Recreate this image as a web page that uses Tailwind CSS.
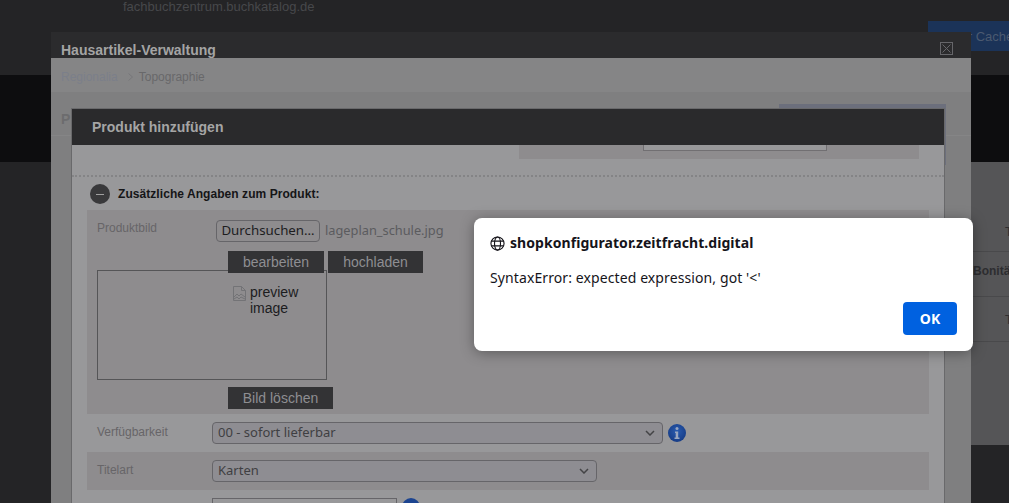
<!DOCTYPE html>
<html lang="de">
<head>
    <meta charset="UTF-8" />
    <title>Hausartikel-Verwaltung</title>
    <script src="https://cdn.jsdelivr.net/npm/@tailwindcss/browser@4"></script>
</head>
<body class="bg-[#242426] font-['Liberation_Sans',sans-serif] overflow-hidden">
<div class="relative h-[503px] w-[1009px] overflow-hidden">
    <!-- Page behind the windows -->
    <div class="h-[75px] bg-[#242426] pl-[123px] text-[13px] leading-[14px] text-[#47484b]">fachbuchzentrum.buchkatalog.de</div>
    <div class="h-[87px] bg-[#0d0d0f]"></div>
    <div class="ml-auto h-[283px] w-[38px] overflow-hidden whitespace-nowrap bg-[#555557] pl-[2px] text-[12px] text-[#2d2d30]">
        <div class="h-[90px] border-b border-[#49494b] pl-[32px] pt-[61px]">T</div>
        <div class="h-[45px] border-b border-[#49494b] pt-[10px] font-bold">Bonität</div>
        <div class="h-[45px] border-b border-[#49494b] pl-[32px] pt-[14px]">T</div>
    </div>
    <div class="absolute left-[928px] top-[21px] h-[30px] w-[81px] overflow-hidden whitespace-nowrap bg-[#1b3358] pl-[13px] pt-[8px] text-[13px] leading-[15px] text-[#4b5a70]">Clear Cache</div>

    <!-- Outer window -->
    <div class="absolute left-[51px] top-[32px] h-[471px] w-[920px] bg-[#7f7f80]">
        <div class="flex h-[26px] items-start justify-between bg-[#2b2b2d] pl-[10px] pr-[18px]">
            <span class="pt-[10px] text-[14px] font-bold leading-[16px] text-[#a4a4a4]">Hausartikel-Verwaltung</span>
            <svg class="mt-[10px] h-[13px] w-[13px]" viewBox="0 0 13 13" fill="none" stroke="#66666a"><rect x="0.5" y="0.5" width="12" height="12"/><path d="M2.5 2.5l8 8M10.5 2.5l-8 8"/></svg>
        </div>
        <div class="flex h-[34px] items-center bg-[#858586] pl-[10px] pt-[4px] text-[12px]">
            <span class="text-[#7b7f8a]">Regionalia</span>
            <svg class="ml-[10px] h-[8px] w-[5px]" viewBox="0 0 5 8" fill="none" stroke="#77777a"><path d="M.5.5l4 3.5-4 3.5"/></svg>
            <span class="ml-[6px] text-[#68686a]">Topographie</span>
        </div>
        <div class="relative h-[44px] border-b border-[#858586] bg-[#7f7f80] pl-[10px] pt-[17px] text-[14px] font-bold text-[#6c6c6e]">
            P
            <div class="absolute right-[25px] top-[12px] h-[61px] w-[167px] bg-[#6c6f7c]"></div>
        </div>
    </div>

    <!-- Inner window -->
    <div class="absolute left-[71px] top-[108px] h-[395px] w-[874px] border-l border-r border-t border-[#69696b] bg-[#98989a]">
        <div class="flex h-[36px] items-center bg-[#2a2a2c] pl-[20px] text-[14px] font-bold text-[#a5a5a5]">Produkt hinzufügen</div>
        <div class="ml-[447px] mr-[25px] h-[14px] bg-[#8e8c8e]">
            <div class="ml-[124px] h-[6px] w-[184px] border-b border-l border-r border-[#716f72] bg-[#98989a]"></div>
        </div>
        <div class="mt-[16px] h-0 border-t-2 border-dotted border-[#848486]"></div>
        <div class="flex h-[33px] items-center gap-[8px] pl-[18px] pt-px">
            <div class="flex h-[20px] w-[20px] items-center justify-center rounded-full bg-[#39393b]"><div class="h-px w-[8px] bg-[#a0a0a0]"></div></div>
            <span class="text-[12px] font-bold tracking-[0.06px] text-[#151517]">Zusätzliche Angaben zum Produkt:</span>
        </div>

        <!-- Produktbild -->
        <div class="relative ml-[15px] mr-[15px] h-[204px] bg-[#8e8c8e]">
            <div class="absolute left-[10px] top-[11px] text-[12px] leading-[14px] text-[#676568]">Produktbild</div>
            <div class="absolute left-[129px] top-[10px] flex items-center gap-[5px] font-['Noto_Sans',sans-serif] text-[12.8px]">
                <button class="h-[22px] w-[104px] whitespace-nowrap rounded-[4px] border border-[#666569] text-[13.3px] text-[#1d1d1f]">Durchsuchen…</button>
                <span class="text-[#5b5b5e]">lageplan_schule.jpg</span>
            </div>
            <div class="absolute left-[10px] top-[60px] h-[110px] w-[230px] border border-[#555557]"></div>
            <div class="absolute left-[141px] top-[41px] flex gap-[4px] text-[14px]">
                <div class="flex h-[22px] w-[96px] items-center justify-center bg-[#333335] text-[#8e8e92]">bearbeiten</div>
                <div class="flex h-[22px] w-[95px] items-center justify-center bg-[#333335] text-[#8e8e92]">hochladen</div>
            </div>
            <div class="absolute left-[146px] top-[74px] flex gap-[4px] text-[14px] leading-[16px] text-[#1c1c1e]">
                <svg class="mt-[2px] h-[15px] w-[13px]" viewBox="0 0 13 15" fill="none" stroke="#737376"><path d="M.5.5h8l4 4v10H.5zM8.5.5v4h4M1 11l3-3 2 2 2-2 4 3M1 13l3-2 2 2 2-2 4 2"/></svg>
                <span class="w-[60px]">preview image</span>
            </div>
            <div class="absolute left-[141px] top-[177px] flex h-[22px] w-[105px] items-center justify-center bg-[#333335] text-[14px] text-[#8e8e92]">Bild löschen</div>
        </div>

        <!-- Verfügbarkeit -->
        <div class="ml-[15px] mr-[15px] flex h-[38px] items-center">
            <span class="w-[125px] pb-[2px] pl-[10px] text-[12px] text-[#676568]">Verfügbarkeit</span>
            <div class="flex h-[22px] w-[451px] items-center justify-between rounded-[4px] border border-[#666569] bg-[#8e8d92] pl-[5px] pr-[7px] font-['Noto_Sans',sans-serif] text-[13px] text-[#3f3f42]">
                00 - sofort lieferbar
                <svg class="h-[6px] w-[10px]" viewBox="0 0 10 6" fill="none" stroke="#444446" stroke-width="1.5"><path d="M1 1l4 4 4-4"/></svg>
            </div>
            <svg class="ml-[5px] h-[18px] w-[18px]" viewBox="0 0 18 18"><defs><radialGradient id="infoBlue" cx="50%" cy="40%" r="60%"><stop offset="0" stop-color="#2a5cb0"/><stop offset="1" stop-color="#163c86"/></radialGradient></defs><circle cx="9" cy="9" r="9" fill="url(#infoBlue)"/><circle cx="9" cy="4.5" r="1.5" fill="#98a6c0"/><path d="M7 7.5h3.2v6H11.5v1.5h-5v-1.5h1.2V9H7z" fill="#98a6c0"/></svg>
        </div>

        <!-- Titelart -->
        <div class="ml-[15px] mr-[15px] flex h-[38px] items-center bg-[#8e8c8e]">
            <span class="w-[125px] pb-[2px] pl-[10px] text-[12px] text-[#676568]">Titelart</span>
            <div class="flex h-[22px] w-[385px] items-center justify-between rounded-[4px] border border-[#666569] bg-[#8e8d92] pl-[5px] pr-[7px] font-['Noto_Sans',sans-serif] text-[13px] text-[#3f3f42]">
                Karten
                <svg class="h-[6px] w-[10px]" viewBox="0 0 10 6" fill="none" stroke="#444446" stroke-width="1.5"><path d="M1 1l4 4 4-4"/></svg>
            </div>
        </div>

        <!-- next row, cut off by the window edge -->
        <div class="ml-[15px] mr-[15px] flex h-[20px] pt-[8px]">
            <div class="ml-[125px] h-[22px] w-[185px] border border-[#666569]"></div>
            <svg class="ml-[5px] h-[18px] w-[18px]" viewBox="0 0 18 18"><circle cx="9" cy="9" r="9" fill="#1c4490"/></svg>
        </div>
    </div>

    <!-- Browser alert -->
    <div class="absolute left-[474px] top-[218px] h-[133px] w-[499px] rounded-[8px] bg-white px-[16px] pt-[16px] font-['Noto_Sans',sans-serif] text-[#15141a] shadow-[0_2px_14px_rgba(0,0,0,0.35)]">
        <div class="flex items-center gap-[5px] text-[14px] font-bold leading-[18px] tracking-[0.06px]">
            <svg class="h-[15px] w-[15px]" viewBox="0 0 16 16" fill="none" stroke="#15141a" stroke-width="1.2"><circle cx="8" cy="8" r="7"/><ellipse cx="8" cy="8" rx="3.2" ry="7"/><path d="M1.5 5.5h13M1.5 10.5h13"/></svg>
            shopkonfigurator.zeitfracht.digital
        </div>
        <div class="mt-[17px] text-[14px] leading-[18px] tracking-[0.1px]">SyntaxError: expected expression, got '&lt;'</div>
        <div class="mt-[15px] flex justify-end">
            <button class="h-[33px] w-[54px] rounded-[4px] bg-[#0061e0] text-[14px] font-bold text-white">OK</button>
        </div>
    </div>
</div>
</body>
</html>
